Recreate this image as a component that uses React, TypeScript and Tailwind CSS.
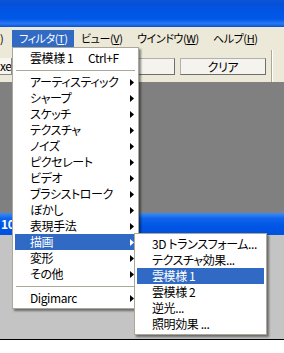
const font = "font-['Noto_Sans_CJK_JP',sans-serif] [font-feature-settings:'palt']";

const Arrow = ({ white }: { white?: boolean }) => (
  <svg width="4" height="7" viewBox="0 0 4 7" className={white ? "fill-white" : "fill-black"}>
    <polygon points="0,0 4,3.5 0,7" />
  </svg>
);

const Separator = () => (
  <div className="flex h-[8px] items-center px-[1px]">
    <div className="h-px w-full bg-[#aca899]" />
  </div>
);

const MenuItem = ({ label, active, arrow = true }: { label: string; active?: boolean; arrow?: boolean }) => (
  <div
    className={`flex h-4 items-center justify-between pl-[15px] pr-[2px] ${
      active ? "bg-[#316ac5] text-white" : "text-black"
    }`}
  >
    <span>{label}</span>
    {arrow && <Arrow white={active} />}
  </div>
);

const Key = ({ label, k }: { label: string; k: string }) => (
  <span>
    {label}(<span className="underline">{k}</span>)
  </span>
);

export default function App() {
  const filters = [
    "アーティスティック",
    "シャープ",
    "スケッチ",
    "テクスチャ",
    "ノイズ",
    "ピクセレート",
    "ビデオ",
    "ブラシストローク",
    "ぼかし",
    "表現手法",
    "描画",
    "変形",
    "その他",
  ];

  const render = [
    "3D トランスフォーム...",
    "テクスチャ効果...",
    "雲模様 1",
    "雲模様 2",
    "逆光...",
    "照明効果 ...",
  ];

  return (
    <div className={`relative h-[353px] w-[284px] overflow-hidden whitespace-nowrap text-[12px] leading-4 tracking-[-0.4px] ${font}`}>
      {/* window title bar */}
      <div className="h-[27px] bg-[linear-gradient(to_bottom,#0a56d4_0%,#0850d8_12%,#0055e5_45%,#0058e8_70%,#2a78f2_88%,#0a4fd0_100%)]" />

      {/* menu bar */}
      <div className="flex h-[20px] items-stretch bg-[#ece9d8] pt-[3px] text-[11px] text-black">
        <div className="w-[12px] shrink-0">)</div>
        <div className="w-[62px] shrink-0 bg-[#316ac5] pl-[7px] text-white">
          <Key label="フィルタ" k="T" />
        </div>
        <div className="w-[56px] shrink-0 pl-[7px]">
          <Key label="ビュー" k="V" />
        </div>
        <div className="w-[76px] shrink-0 pl-[7px]">
          <Key label="ウインドウ" k="W" />
        </div>
        <div className="shrink-0 pl-[7px]">
          <Key label="ヘルプ" k="H" />
        </div>
      </div>

      {/* toolbar */}
      <div className="flex h-[35px] bg-[#ece9d8]">
        <div className="mt-[11px] h-[17px] w-[12px] overflow-hidden border-b border-r border-[#8a8a8a] bg-[#f7f6f1] text-black">
          xe
        </div>
        <div className="ml-[88px] mt-[11px] h-[17px] w-[75px] border border-[#b0b0b0] border-b-[#6e6e6e] border-r-[#6e6e6e] bg-[#f4f3ee]" />
        <div className="ml-[5px] mt-[11px] flex h-[17px] w-[86px] items-center justify-center border border-[#b0b0b0] border-b-[#6e6e6e] border-r-[#6e6e6e] bg-[#f4f3ee] text-black">
          クリア
        </div>
        <div className="ml-[5px] mt-[3px] w-[2px] border-l border-r border-l-[#aca899] border-r-white" />
      </div>

      {/* workspace */}
      <div className="h-[131px] bg-[#808080]" />
      <div className="h-[22px] bg-[linear-gradient(to_bottom,#3d8cf5_0%,#1064ea_25%,#0055e5_60%,#0052df_100%)] pl-[1px] pt-[3px] font-bold text-white">
        10
      </div>
      <div className="h-[104px] bg-[#c4c4c4]" />
      <div className="h-px bg-black" />
      <div className="h-[13px] bg-white" />

      {/* filter menu */}
      <div className="absolute left-[12px] top-[47px] w-[127px] border border-[#aca899] bg-white p-[2px] shadow-[2px_2px_2px_rgba(0,0,0,0.45)]">
        <div className="flex h-4 items-center pl-[15px] text-black">
          <span className="w-[58px]">雲模様 1</span>
          <span>Ctrl+F</span>
        </div>
        <Separator />
        {filters.map((f) => (
          <MenuItem key={f} label={f} active={f === "描画"} />
        ))}
        <Separator />
        <MenuItem label="Digimarc" />
      </div>

      {/* render submenu */}
      <div className="absolute left-[134px] top-[233px] w-[133px] border border-[#aca899] bg-white p-[2px] shadow-[2px_2px_2px_rgba(0,0,0,0.45)]">
        {render.map((r) => (
          <MenuItem key={r} label={r} active={r === "雲模様 1"} arrow={false} />
        ))}
      </div>
    </div>
  );
}
